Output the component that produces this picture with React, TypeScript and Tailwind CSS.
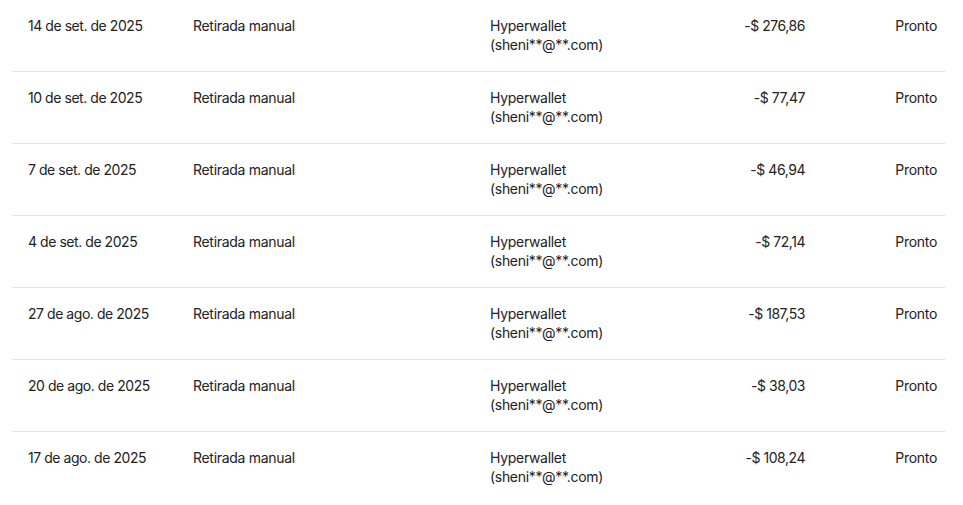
import React from "react";

const rows = [
  { date: "14 de set. de 2025", amount: "-$ 276,86" },
  { date: "10 de set. de 2025", amount: "-$ 77,47" },
  { date: "7 de set. de 2025", amount: "-$ 46,94" },
  { date: "4 de set. de 2025", amount: "-$ 72,14" },
  { date: "27 de ago. de 2025", amount: "-$ 187,53" },
  { date: "20 de ago. de 2025", amount: "-$ 38,03" },
  { date: "17 de ago. de 2025", amount: "-$ 108,24" },
];

export default function App() {
  return (
    <div
      className="bg-white w-[963px] h-[505px] overflow-hidden px-[12px] text-[14px] leading-[19px] tracking-[-0.3px] text-[#222222]"
      style={{ fontFamily: "Inter, 'Noto Sans', sans-serif" }}
    >
      {rows.map((r, i) => (
        <div
          key={i}
          className={`flex w-[933px] pl-[16px] pr-[8px] pt-[16px] pb-[17px] ${
            i < rows.length - 1 ? "border-b border-[#e3e3e3]" : ""
          }`}
        >
          <div className="w-[165px] tracking-[-0.45px]">{r.date}</div>
          <div className="w-[297px]">Retirada manual</div>
          <div className="w-[180px]">
            <div>Hyperwallet</div>
            <div>(sheni**@**.com)</div>
          </div>
          <div className="w-[135px] text-right tracking-[-0.45px]">{r.amount}</div>
          <div className="flex-1 text-right">Pronto</div>
        </div>
      ))}
    </div>
  );
}
